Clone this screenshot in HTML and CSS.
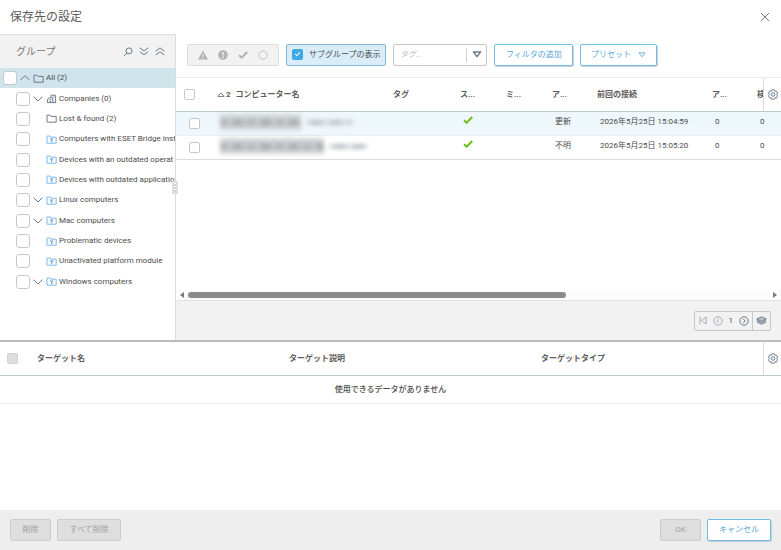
FILE: index.html
```html
<!DOCTYPE html>
<html lang="ja">
<head>
<meta charset="utf-8">
<title>保存先の設定</title>
<link rel="stylesheet" href="styles.css">
</head>
<body>
<svg class="defs" aria-hidden="true">
  <symbol id="i-down" viewBox="0 0 10 6"><path d="M.7.7 5 5 9.3.7"/></symbol>
  <symbol id="i-up" viewBox="0 0 10 6"><path d="M.7 5 5 .7 9.3 5"/></symbol>
  <symbol id="i-folder" viewBox="0 0 11 9"><path d="M1 8.2V1.2h3l1 1.2h5.2v5.8z"/></symbol>
  <symbol id="i-dyn" viewBox="0 0 11 9"><path d="M1 8.2V1h3l1 1.2h5.2v6z"/><path class="solid" d="M3.4 3.6h4.4L6.2 5.3v1.9H5V5.3z"/></symbol>
  <symbol id="i-company" viewBox="0 0 11 10"><path d="M5 3V1.2h4.4v7.4M1 8.6h9M1.6 8.4V5.2l1.8-1.5h3.4v4.9M3.4 5.7h1.8M3.4 7.2h1.8M7.4 2.8h.8"/></symbol>
  <symbol id="i-gear" viewBox="0 0 10 11"><path d="M3.6.9h2.8l.5 1.3 1.5-.1 1.1 2-.8 1.4.8 1.4-1.1 2-1.5-.1-.5 1.3H3.6l-.5-1.3-1.5.1-1.1-2 .8-1.4-.8-1.4 1.1-2 1.5.1z"/><circle cx="5" cy="5.5" r="1.8"/></symbol>
  <symbol id="i-tri" viewBox="0 0 9 7"><path d="M.9 1h7.2L4.5 5.6z"/></symbol>
  <symbol id="i-check" viewBox="0 0 10 8"><path d="M1 4.2 3.7 6.7 9.2 1"/></symbol>
</svg>
<div class="dialog">
  <header class="title-bar">
    <h1>保存先の設定</h1>
    <button class="bare" aria-label="閉じる"><svg class="icon" width="10" height="10" viewBox="0 0 10 10"><path d="M1 1l8 8M9 1 1 9"/></svg></button>
  </header>

  <section class="workspace">
    <aside class="sidebar">
      <div class="side-head">
        <h2>グループ</h2>
        <button class="bare" aria-label="検索"><svg class="icon" width="10" height="10" viewBox="0 0 10 10"><circle cx="6" cy="3.9" r="3"/><path d="M3.9 6 .8 9.2"/></svg></button>
        <button class="bare" aria-label="すべて展開"><svg class="icon" width="10" height="9" viewBox="0 0 10 9"><path d="M.7.8 5 4 9.3.8M.7 4.6 5 7.8l4.3-3.2"/></svg></button>
        <button class="bare" aria-label="すべて折りたたむ"><svg class="icon" width="10" height="9" viewBox="0 0 10 9"><path d="M.7 4.2 5 1l4.3 3.2M.7 8 5 4.8 9.3 8"/></svg></button>
      </div>
      <ul class="tree">
        <li class="root"><input type="checkbox" id="g0"><button class="bare twist" aria-label="折りたたむ"><svg class="icon" width="10" height="6"><use href="#i-up"/></svg></button><svg class="icon kind" width="11" height="9"><use href="#i-folder"/></svg><label for="g0">All (2)</label></li>
        <li><input type="checkbox" id="g1"><button class="bare twist" aria-label="展開"><svg class="icon" width="10" height="6"><use href="#i-down"/></svg></button><svg class="icon kind" width="11" height="10"><use href="#i-company"/></svg><label for="g1">Companies (0)</label></li>
        <li><input type="checkbox" id="g2"><span class="twist"></span><svg class="icon kind" width="11" height="9"><use href="#i-folder"/></svg><label for="g2">Lost &amp; found (2)</label></li>
        <li><input type="checkbox" id="g3"><span class="twist"></span><svg class="icon kind dyn" width="11" height="9"><use href="#i-dyn"/></svg><label for="g3">Computers with ESET Bridge inst</label></li>
        <li><input type="checkbox" id="g4"><span class="twist"></span><svg class="icon kind dyn" width="11" height="9"><use href="#i-dyn"/></svg><label for="g4">Devices with an outdated operat</label></li>
        <li><input type="checkbox" id="g5"><span class="twist"></span><svg class="icon kind dyn" width="11" height="9"><use href="#i-dyn"/></svg><label for="g5">Devices with outdated applicatio</label></li>
        <li><input type="checkbox" id="g6"><button class="bare twist" aria-label="展開"><svg class="icon" width="10" height="6"><use href="#i-down"/></svg></button><svg class="icon kind dyn" width="11" height="9"><use href="#i-dyn"/></svg><label for="g6">Linux computers</label></li>
        <li><input type="checkbox" id="g7"><button class="bare twist" aria-label="展開"><svg class="icon" width="10" height="6"><use href="#i-down"/></svg></button><svg class="icon kind dyn" width="11" height="9"><use href="#i-dyn"/></svg><label for="g7">Mac computers</label></li>
        <li><input type="checkbox" id="g8"><span class="twist"></span><svg class="icon kind dyn" width="11" height="9"><use href="#i-dyn"/></svg><label for="g8">Problematic devices</label></li>
        <li><input type="checkbox" id="g9"><span class="twist"></span><svg class="icon kind dyn" width="11" height="9"><use href="#i-dyn"/></svg><label for="g9">Unactivated platform module</label></li>
        <li><input type="checkbox" id="g10"><button class="bare twist" aria-label="展開"><svg class="icon" width="10" height="6"><use href="#i-down"/></svg></button><svg class="icon kind dyn" width="11" height="9"><use href="#i-dyn"/></svg><label for="g10">Windows computers</label></li>
      </ul>
      <div class="grip"></div>
    </aside>

    <main class="content">
      <div class="toolbar">
        <div class="status-filter">
          <button class="bare" aria-label="警告"><svg width="10" height="10" viewBox="0 0 10 10"><path fill="#b4b4b4" d="M5 .6 10 9.4H0z"/><path stroke="#f2f2f2" d="M5 3.6v2.8M5 7.2v1.2"/></svg></button>
          <button class="bare" aria-label="エラー"><svg width="10" height="10" viewBox="0 0 10 10"><circle cx="5" cy="5" r="4.8" fill="#b4b4b4"/><path stroke="#f2f2f2" stroke-width="1.4" d="M5 2v3.6M5 6.6V8"/></svg></button>
          <button class="bare" aria-label="OK"><svg class="tick" width="10" height="8"><use href="#i-check"/></svg></button>
          <button class="bare" aria-label="なし"><svg width="10" height="10" viewBox="0 0 10 10"><circle cx="5" cy="5" r="4.2" fill="none" stroke="#c4c4c4"/></svg></button>
        </div>
        <label class="subgroups"><input type="checkbox" checked>サブグループの表示</label>
        <div class="tag-box">
          <input type="text" placeholder="タグ..." aria-label="タグ">
          <button class="bare" aria-label="タグを選択"><svg class="icon heavy" width="10" height="7" viewBox="0 0 9 7"><use href="#i-tri"/></svg></button>
        </div>
        <button class="btn primary wide">フィルタの追加</button>
        <button class="btn primary preset">プリセット<svg class="icon" width="8" height="6" viewBox="0 0 9 7"><use href="#i-tri"/></svg></button>
      </div>

      <div class="grid-area">
        <table class="grid">
          <colgroup><col class="c-box"><col><col class="c-tag"><col class="c-s"><col class="c-s"><col class="c-m"><col class="c-date"><col class="c-m"><col class="c-last"><col class="c-gear"></colgroup>
          <thead>
            <tr>
              <th class="box"><input type="checkbox" aria-label="すべて選択"></th>
              <th><span class="sorted"><svg class="icon" width="8" height="5" viewBox="0 0 8 5"><path d="M.8 4.4 4 1l3.2 3.4z"/></svg><span>2</span><span class="col-name">コンピューター名</span></span></th>
              <th>タグ</th><th>ス...</th><th>ミ...</th><th>ア...</th><th>前回の接続</th><th>ア...</th><th class="cut">検</th>
              <th class="gear"><button class="bare" aria-label="列の設定"><svg class="icon" width="10" height="11"><use href="#i-gear"/></svg></button></th>
            </tr>
          </thead>
          <tbody>
            <tr class="current">
              <td class="box"><input type="checkbox" aria-label="行1を選択"></td>
              <td><span class="redacted first"><i></i><b></b></span></td>
              <td></td><td class="state"><svg class="tick ok" width="10" height="8"><use href="#i-check"/></svg></td><td></td><td>更新</td><td>2026年5月25日 15:04:59</td><td>0</td><td>0</td><td></td>
            </tr>
            <tr>
              <td class="box"><input type="checkbox" aria-label="行2を選択"></td>
              <td><span class="redacted second"><i></i><b></b></span></td>
              <td></td><td class="state"><svg class="tick ok" width="10" height="8"><use href="#i-check"/></svg></td><td></td><td>不明</td><td>2026年5月25日 15:05:20</td><td>0</td><td>0</td><td></td>
            </tr>
          </tbody>
        </table>
      </div>
      <div class="hscroll">
        <svg width="4" height="6" viewBox="0 0 4 6"><path d="M4 0v6L0 3z"/></svg>
        <div class="track"><div class="thumb"></div></div>
        <svg width="4" height="6" viewBox="0 0 4 6"><path d="M0 0v6l4-3z"/></svg>
      </div>
      <div class="pager-bar">
        <nav class="pager">
          <button class="bare dim" aria-label="最初"><svg class="icon" width="8" height="9" viewBox="0 0 8 9"><path d="M1 .5v8M7.2 1v7L2.4 4.5z"/></svg></button>
          <button class="bare dim" aria-label="前へ"><svg class="icon" width="10" height="10" viewBox="0 0 10 10"><circle cx="5" cy="5" r="4.2"/><path d="M5.8 2.9 3.9 5l1.9 2.1"/></svg></button>
          <span>1</span>
          <button class="bare" aria-label="次へ"><svg class="icon" width="10" height="10" viewBox="0 0 10 10"><circle cx="5" cy="5" r="4.2"/><path d="M4.2 2.9 6.1 5 4.2 7.1"/></svg></button>
          <button class="bare layers" aria-label="ページ"><svg class="icon" width="11" height="9" viewBox="0 0 11 9"><path fill="#b9c2ca" d="M5.5.8 10.2 3 5.5 5.4.8 3z"/><path d="M.8 4.4 5.5 6.8l4.7-2.4M.8 5.9l4.7 2.3 4.7-2.3"/></svg></button>
        </nav>
      </div>
    </main>
  </section>

  <section class="targets">
    <table class="grid target-grid">
      <colgroup><col class="c-tbox"><col class="c-target"><col class="c-target"><col><col class="c-gear"></colgroup>
      <thead>
        <tr>
          <th class="box"><input type="checkbox" disabled aria-label="すべて選択"></th>
          <th>ターゲット名</th><th>ターゲット説明</th><th>ターゲットタイプ</th>
          <th class="gear"><button class="bare" aria-label="列の設定"><svg class="icon" width="10" height="11"><use href="#i-gear"/></svg></button></th>
        </tr>
      </thead>
      <tbody><tr><td class="empty" colspan="5">使用できるデータがありません</td></tr></tbody>
    </table>
  </section>

  <footer class="actions">
    <button class="btn" disabled>削除</button>
    <button class="btn roomy" disabled>すべて削除</button>
    <span class="spacer"></span>
    <button class="btn" disabled>OK</button>
    <button class="btn primary roomy">キャンセル</button>
  </footer>
</div>
</body>
</html>
```
FILE: styles.css
```css
* { box-sizing: border-box; }

body {
  margin: 0;
  font: 8px/12px Roboto, "Noto Sans CJK JP", sans-serif;
  color: #4c4c4c;
  background: #fff;
}

button, input {
  font: inherit;
  color: inherit;
  margin: 0;
}

.defs { position: absolute; width: 0; height: 0; }
svg { display: block; flex: none; }

.icon {
  fill: none;
  stroke: #6b7b8c;
  stroke-width: 1;
}
.icon.heavy { stroke-width: 1.4; }
.solid { fill: currentColor; stroke: none; }

.bare {
  padding: 0;
  border: 0;
  background: none;
}

input[type="checkbox"] {
  appearance: none;
  flex: none;
  display: block;
  width: 11px;
  height: 11px;
  border: 1px solid #c8c8c8;
  border-radius: 2px;
  background: #fff;
}
input[type="checkbox"]:disabled { background: #ddd; border-color: #d2d2d2; }

.dialog {
  display: flex;
  flex-direction: column;
  min-height: 100vh;
}

.title-bar {
  display: flex;
  align-items: center;
  justify-content: space-between;
  height: 34px;
  padding: 0 11px 0 10px;
}
h1 {
  margin: 0;
  font-size: 12px;
  line-height: 16px;
  font-weight: 400;
  color: #5c5c5c;
}

.workspace {
  display: flex;
  flex: 306 1 0;
}

/* Group tree */
.sidebar {
  position: relative;
  flex: none;
  width: 176px;
  border-right: 1px solid #dcdcdc;
}
.side-head {
  display: flex;
  align-items: center;
  gap: 6px;
  height: 34px;
  padding: 0 10px 0 16px;
  border-top: 1px solid #dcdcdc;
  background: #f2f2f2;
}
h2 {
  flex: 1;
  margin: 0;
  font-size: 10px;
  line-height: 12px;
  font-weight: 400;
  color: #777;
}
.tree {
  display: grid;
  grid-auto-rows: 1fr;
  height: 224px;
  margin: 0;
  padding: 0;
  list-style: none;
  overflow: hidden;
}
.tree li {
  display: flex;
  align-items: center;
  padding-left: 16px;
  white-space: nowrap;
  overflow: hidden;
}
.tree .root { padding-left: 3px; background: #d0e4eb; }
.tree input[type="checkbox"] { width: 14px; height: 14px; border-radius: 3px; }
.twist { flex: none; width: 10px; margin: 0 3px; }
.kind { margin-right: 2px; }
.dyn { stroke: #7db9ec; color: #6aaee8; }

.grip {
  position: absolute;
  right: -3px;
  top: 147px;
  width: 6px;
  height: 13px;
  border: 2px solid #dedede;
  background: repeating-linear-gradient(#fff 0 1px, #d0d0d0 1px 3px);
}

/* Main column */
.content {
  display: flex;
  flex-direction: column;
  flex: 1;
  min-width: 0;
}
.toolbar {
  display: flex;
  align-items: center;
  gap: 7px;
  height: 44px;
  padding: 0 11px 2px;
  border-bottom: 1px solid #ececec;
}
.status-filter {
  display: flex;
  align-items: center;
  justify-content: space-between;
  width: 92px;
  height: 22px;
  padding: 0 10px;
  border: 1px solid #dedede;
  border-radius: 2px;
  background: #f2f2f2;
}
.tick { fill: none; stroke: #b4b4b4; stroke-width: 2; }
.tick.ok { stroke: #6fbe1c; }

.subgroups {
  display: flex;
  align-items: center;
  gap: 6px;
  width: 100px;
  height: 22px;
  padding-left: 5px;
  border: 1px solid #86b8da;
  border-radius: 2px;
  background: #d9edf8;
  white-space: nowrap;
}
.subgroups input[type="checkbox"] {
  border: 0;
  background: #3da8e6;
  position: relative;
}
.subgroups input::after {
  content: "";
  position: absolute;
  left: 4px;
  top: 2px;
  width: 3px;
  height: 6px;
  box-sizing: content-box;
  width: 2px;
  height: 4px;
  border: solid #fff;
  border-width: 0 1px 1px 0;
  transform: rotate(42deg);
}

.tag-box {
  display: flex;
  width: 94px;
  height: 22px;
  border: 1px solid #c8c8c8;
  border-radius: 2px;
}
.tag-box input {
  flex: 1;
  min-width: 0;
  padding: 0 6px;
  border: 0;
  background: none;
  outline: 0;
}
.tag-box input::placeholder { color: #b8b8b8; font-style: italic; opacity: 1; }
.tag-box button {
  display: grid;
  place-items: center;
  width: 20px;
  margin: 3px 0;
  border-left: 1px solid #d0d0d0;
}

.btn {
  min-width: 41px;
  height: 22px;
  padding: 0 11px;
  border: 1px solid #cdcdcd;
  border-radius: 2px;
  background: #dedede;
  color: #a0a0a0;
  white-space: nowrap;
}
.btn.primary {
  border-color: #6fbce8;
  background: #fff;
  color: #5aa6d8;
  box-shadow: 1px 1px 1px #c4d0d6;
}
.btn.wide { width: 79px; }
.btn.roomy { min-width: 64px; }
.btn.preset {
  display: flex;
  align-items: center;
  justify-content: space-between;
  width: 77px;
  padding: 0 10px;
}
.btn .icon { stroke: #5aa6d8; }

/* Tables */
.grid-area { flex: 1; overflow: hidden; }
.grid {
  width: 100%;
  table-layout: fixed;
  border-collapse: separate;
  border-spacing: 0;
}
.grid th, .grid td {
  padding: 0 0 0 5px;
  text-align: left;
  white-space: nowrap;
}
.grid th {
  height: 34px;
  font-weight: 700;
  color: #5c5c5c;
  border-bottom: 1px solid #b9c7ce;
}
.grid td {
  height: 24px;
  padding-left: 8px;
  padding-bottom: 3px;
  border-bottom: 1px solid #dcdcdc;
}
.grid .current td { background: #eef7fb; border-bottom-color: #e9eff2; }
.grid th.box { padding-left: 8px; }
.grid td.box { padding: 0 0 0 13px; }
.grid td.state { padding-bottom: 7px; }
.grid th.cut { overflow: hidden; }
.grid th.gear { padding: 0 0 0 4px; border-left: 1px solid #dcdcdc; }
.gear button { display: block; }
.c-box { width: 36px; }
.c-tag { width: 67px; }
.c-s { width: 46px; }
.c-m { width: 45px; }
.c-date { width: 115px; }
.c-last { width: 11px; }
.c-gear { width: 18px; }
.c-tbox { width: 32px; }
.c-target { width: 252px; }

.sorted { display: flex; align-items: center; gap: 1px; }
.col-name { margin-left: 4px; }

.redacted { display: flex; align-items: center; gap: 5px; filter: blur(2px); }
.redacted i {
  height: 16px;
  background:
    repeating-linear-gradient(90deg, #b4b7ba 0 6px, #c6c8ca 8px 11px, #aeb1b4 14px 21px, #c4c6c8 24px 28px) 0 5px / 100% 7px no-repeat,
    #d0d4d6;
}
.redacted b {
  height: 5px;
  background: repeating-linear-gradient(90deg, #d6dadd 0 4px, #bcc1c4 6px 15px, #d2d6d9 17px 19px);
}
.first i { width: 81px; }
.first b { width: 46px; }
.second i { width: 104px; }
.second b { width: 38px; }

.hscroll {
  display: flex;
  align-items: center;
  gap: 4px;
  height: 10px;
  padding: 0 4px;
  background: #fcfcfc;
  fill: #777;
}
.track { flex: 1; }
.thumb { width: 65%; height: 6px; border-radius: 3px; background: #8b8b8b; }

.pager-bar {
  display: flex;
  align-items: center;
  justify-content: flex-end;
  height: 40px;
  padding: 0 10px;
  border-top: 1px solid #e2e2e2;
  background: #f2f2f2;
}
.pager {
  display: flex;
  align-items: center;
  gap: 6px;
  height: 20px;
  padding-left: 4px;
  border: 1px solid #c8c8c8;
  border-radius: 2px;
}
.dim .icon { stroke: #a8aeb4; }
.layers {
  height: 100%;
  margin-left: -3px;
  padding: 0 3px;
  border-left: 1px solid #c8c8c8;
}

.targets { flex: 168 1 0; border-top: 2px solid #bcbcbc; }
.target-grid th.box { padding-left: 7px; }
.target-grid td.empty {
  height: 28px;
  padding: 0;
  text-align: center;
  font-weight: 500;
  border-bottom-color: #eee;
}

.actions {
  display: flex;
  align-items: center;
  gap: 6px;
  height: 40px;
  padding: 0 10px;
  background: #eee;
}
.spacer { flex: 1; }
```
